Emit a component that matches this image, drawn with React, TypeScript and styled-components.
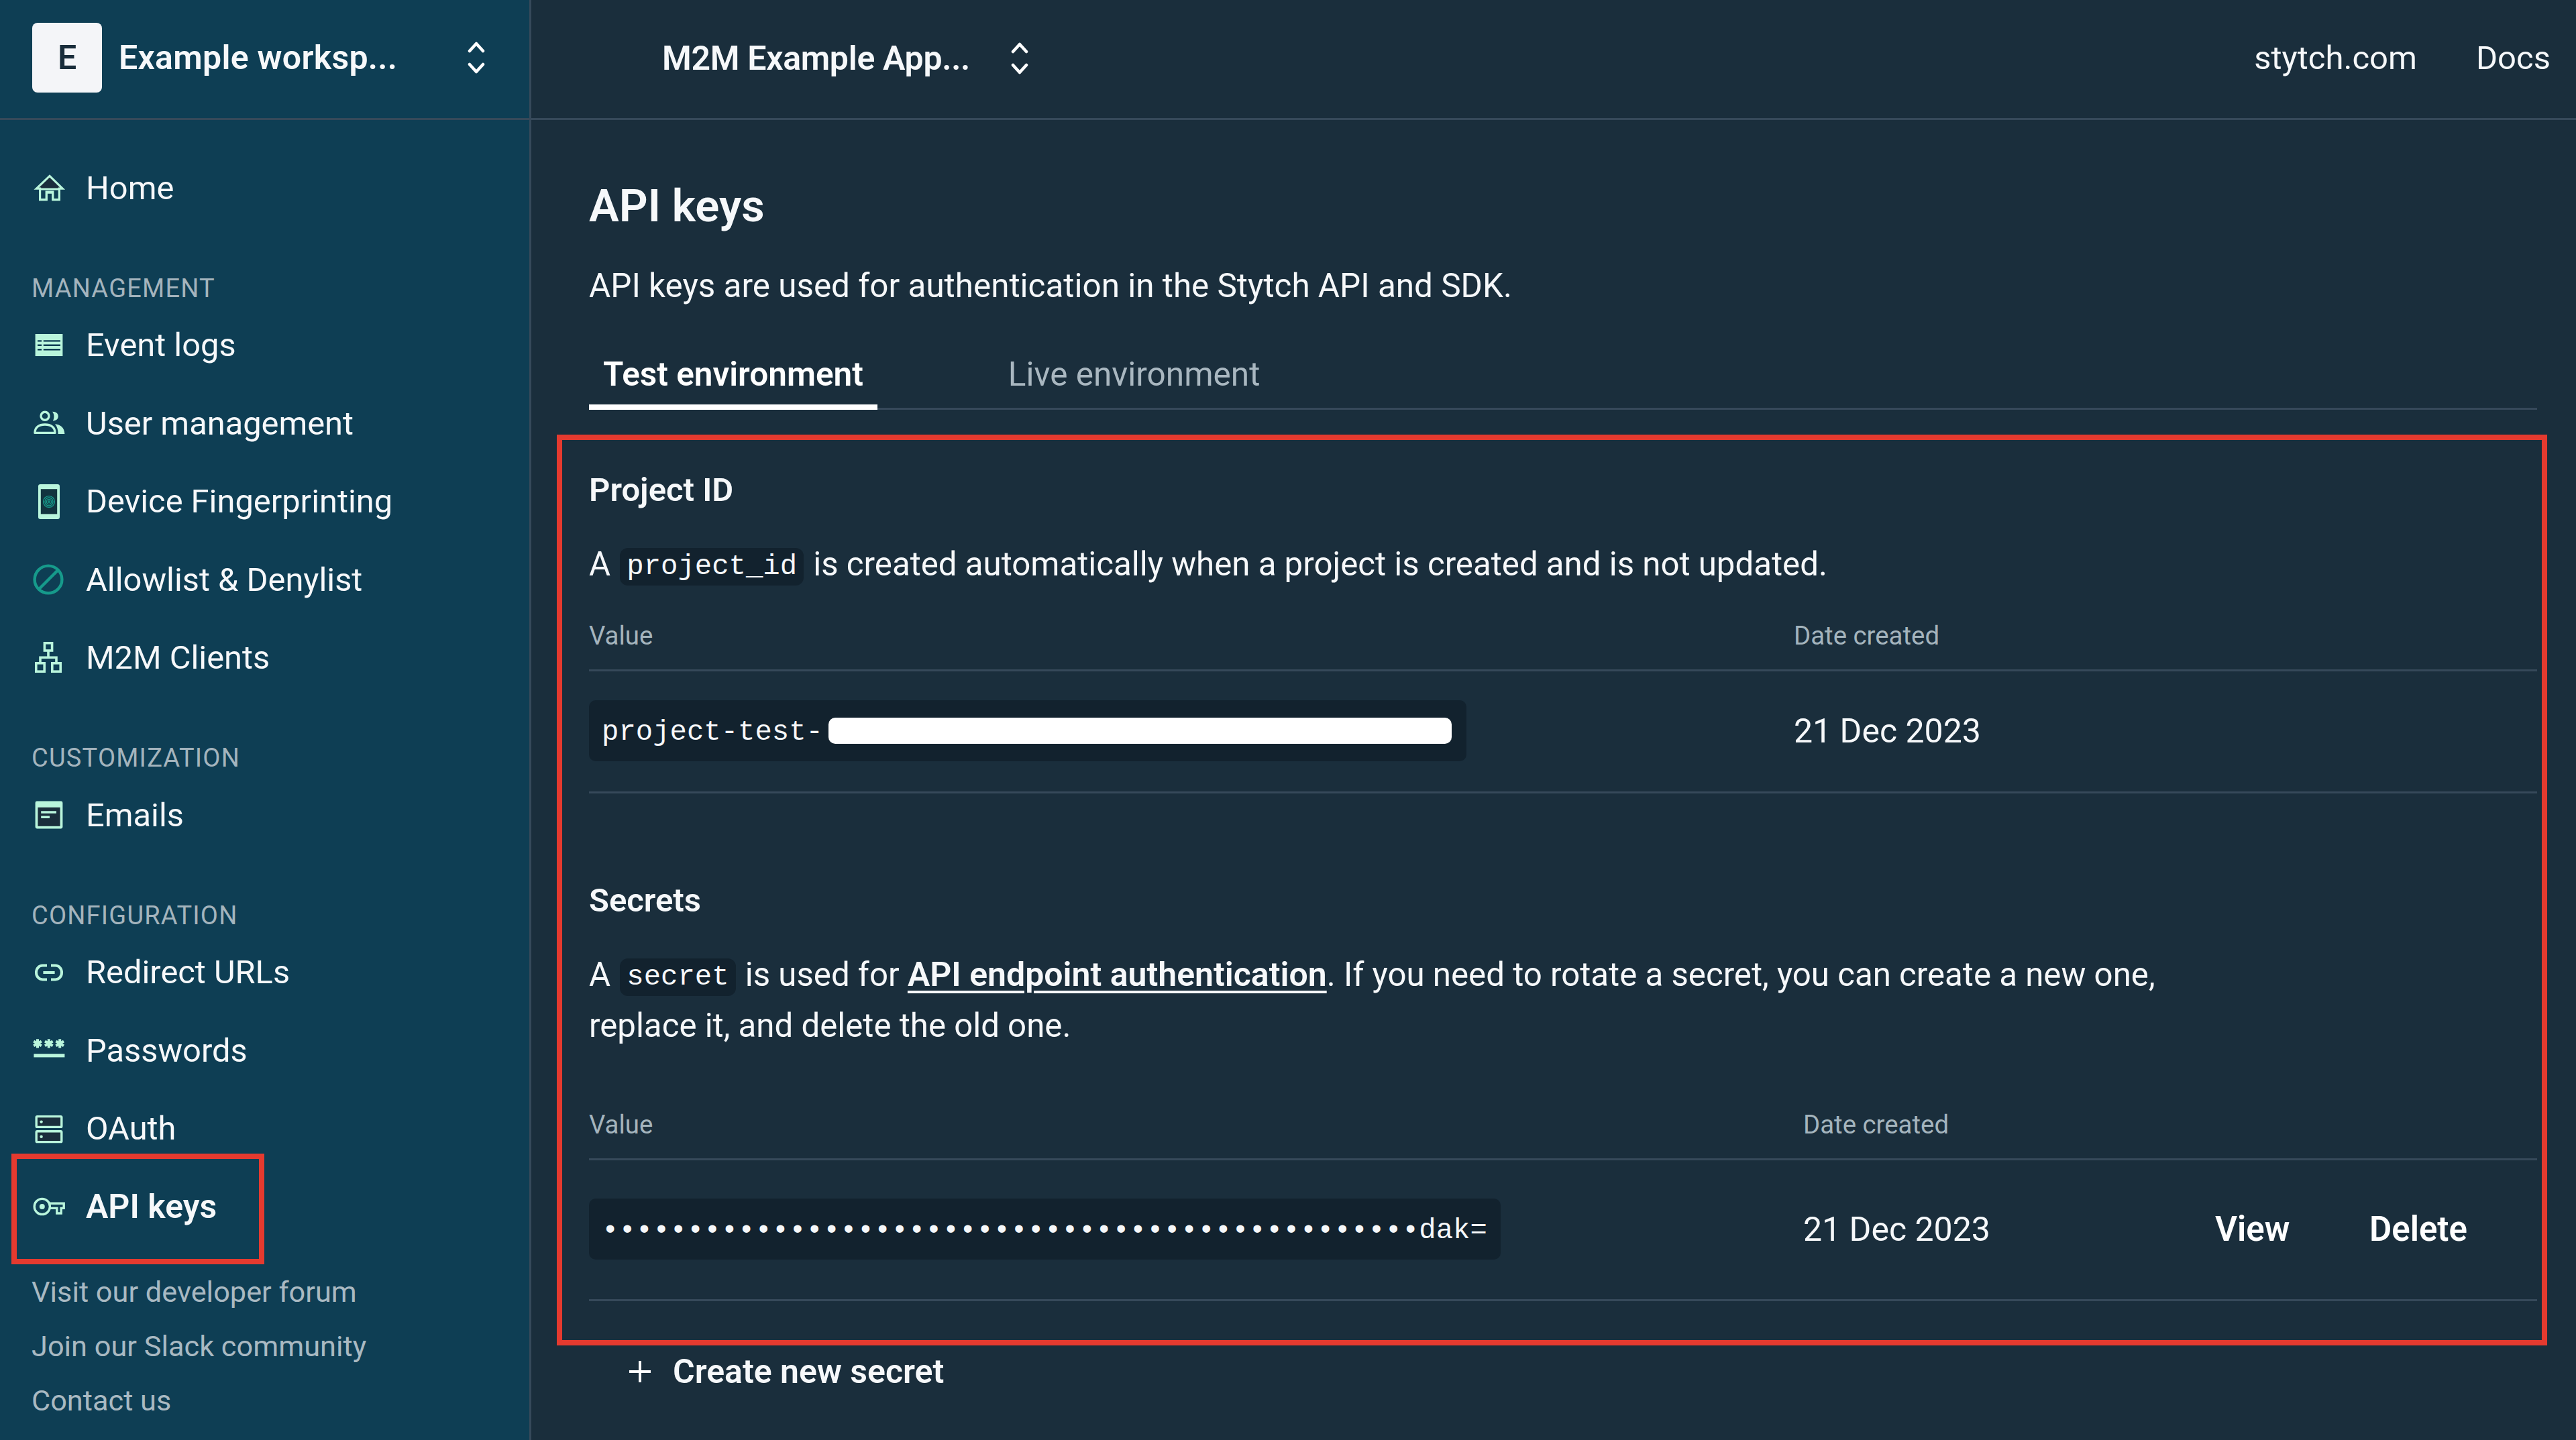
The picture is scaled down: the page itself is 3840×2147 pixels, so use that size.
import styled, { createGlobalStyle } from 'styled-components';
import type { ReactNode } from 'react';

const MINT = '#b9f5dc';
const TEAL = '#169a8b';
const NAVY = '#1a2e3c';
const SANS = '"Roboto", "Inter", "Liberation Sans", sans-serif';
const MONO = '"Liberation Mono", "DejaVu Sans Mono", monospace';

const GlobalStyle = createGlobalStyle`
  html, body {
    margin: 0;
    padding: 0;
    background: ${NAVY};
    overflow: hidden;
  }
  * {
    box-sizing: border-box;
  }
`;

const Shell = styled.div`
  position: relative;
  display: grid;
  grid-template-columns: 792px 1fr;
  width: 3840px;
  height: 2147px;
  overflow: hidden;
  font-family: ${SANS};
  color: #f6f8fa;
  background: ${NAVY};
`;

const Sidebar = styled.aside`
  display: flex;
  flex-direction: column;
  height: 100%;
  background: #0e3e54;
  border-right: 3px solid #36495a;
`;

const TopBar = styled.div`
  display: flex;
  align-items: center;
  flex: none;
  height: 179px;
  border-bottom: 3px solid #36495a;
`;

const WorkspaceBar = styled(TopBar)`
  padding: 0 0 5px 48px;
`;

const LogoTile = styled.div`
  display: flex;
  align-items: center;
  justify-content: center;
  width: 104px;
  height: 104px;
  margin-right: 25px;
  border-radius: 8px;
  background: #f4f5f8;
  color: ${NAVY};
  font-size: 50px;
  font-weight: 600;
`;

const SwitcherName = styled.span<{ $width: number; $tracking: number }>`
  width: ${(p) => p.$width}px;
  font-size: 50px;
  font-weight: 600;
  letter-spacing: ${(p) => p.$tracking}px;
  white-space: nowrap;
`;

const NavGroup = styled.nav<{ $top: number }>`
  display: flex;
  flex-direction: column;
  margin-top: ${(p) => p.$top}px;
`;

const GroupLabel = styled.div`
  height: 52px;
  padding-left: 47px;
  font-size: 38px;
  line-height: 50px;
  letter-spacing: 1.2px;
  color: #a4b4bd;
`;

const NavRow = styled.a<{ $active?: boolean }>`
  display: flex;
  align-items: center;
  gap: 32px;
  height: 116.5px;
  padding-left: 48px;
  font-size: ${(p) => (p.$active ? 50 : 48.8)}px;
  font-weight: ${(p) => (p.$active ? 600 : 400)};
  color: #f6f8fa;
`;

const FooterLinks = styled.div`
  display: flex;
  flex-direction: column;
  margin-top: 28px;
  padding-left: 47px;
`;

const FooterLink = styled.a`
  height: 81px;
  font-size: 43.3px;
  line-height: 81px;
  color: #a9b9c2;
`;

const Icon = styled.svg`
  display: block;
  flex: none;
  width: 48px;
  height: 48px;
  overflow: visible;
`;

const Chevrons = styled.svg`
  display: block;
  width: 26px;
  height: 50px;
`;

const Main = styled.main`
  display: flex;
  flex-direction: column;
  min-width: 0;
`;

const AppBar = styled(TopBar)`
  padding: 0 38px 3px 195px;
`;

const TopLinks = styled.div`
  display: flex;
  gap: 88px;
  margin-left: auto;
  font-size: 49px;
`;

const Content = styled.div`
  display: flex;
  flex-direction: column;
  padding: 0 58px 0 86px;
`;

const Title = styled.h1`
  margin: 88px 0 0;
  font-size: 67px;
  font-weight: 600;
  line-height: 80px;
`;

const Lead = styled.p`
  margin: 41px 0 0;
  font-size: 49.4px;
  line-height: 76px;
`;

const Tabs = styled.div`
  display: flex;
  gap: 174px;
  height: 100px;
  margin-top: 47px;
  border-bottom: 3px solid #36495a;
`;

const Tab = styled.div<{ $active?: boolean }>`
  height: 100px;
  padding: 0 21px;
  font-size: 49.5px;
  font-weight: ${(p) => (p.$active ? 600 : 400)};
  line-height: 94px;
  color: ${(p) => (p.$active ? '#ffffff' : '#a9b7c0')};
  border-bottom: ${(p) => (p.$active ? '8px solid #ffffff' : 'none')};
`;

const SectionTitle = styled.h2<{ $top: number }>`
  margin: ${(p) => p.$top}px 0 0;
  font-size: 49px;
  font-weight: 600;
  line-height: 60px;
`;

const Paragraph = styled.p`
  margin: 42px 0 0;
  font-size: 49.2px;
  line-height: 76px;
`;

const InlineCode = styled.code`
  display: inline-block;
  height: 56px;
  margin: 0 2px;
  padding: 0 10px;
  border-radius: 12px;
  background: #12222e;
  font-family: ${MONO};
  font-size: 42.3px;
  line-height: 56px;
  vertical-align: 2px;
`;

const DocLink = styled.a`
  font-size: 50px;
  font-weight: 600;
  text-decoration: underline;
  text-underline-offset: 7px;
  text-decoration-thickness: 4px;
`;

const HeadRow = styled.div<{ $columns: string; $top: number }>`
  display: grid;
  grid-template-columns: ${(p) => p.$columns};
  padding: ${(p) => p.$top}px 0 25px;
  font-size: 38.4px;
  line-height: 50px;
  color: #a4b4bd;
  border-bottom: 3px solid #36495a;
`;

const BodyRow = styled.div<{ $columns: string; $top: number; $bottom: number }>`
  display: grid;
  grid-template-columns: ${(p) => p.$columns};
  align-items: center;
  padding: ${(p) => p.$top}px 0 ${(p) => p.$bottom}px;
  font-size: 50px;
  border-bottom: 3px solid #36495a;
`;

const ValuePill = styled.div<{ $width: number }>`
  display: flex;
  align-items: center;
  width: ${(p) => p.$width}px;
  height: 91px;
  padding: 5px 0 0 19px;
  border-radius: 10px;
  background: #12222e;
  font-family: ${MONO};
  font-size: 42.3px;
  white-space: nowrap;
`;

const Redacted = styled.span`
  width: 929px;
  height: 39px;
  margin: -5px 0 0 8px;
  border-radius: 10px;
  background: #ffffff;
`;

const RowAction = styled.a`
  font-size: 51px;
  font-weight: 600;
  color: #ffffff;
`;

const CreateButton = styled.a`
  display: flex;
  align-items: center;
  gap: 32px;
  height: 60px;
  margin: 75px 0 0 59px;
  font-size: 50px;
  font-weight: 600;
`;

const PlusIcon = styled.svg`
  display: block;
  width: 34px;
  height: 34px;
`;

const Annotation = styled.div<{ $left: number; $top: number; $width: number; $height: number }>`
  position: absolute;
  left: ${(p) => p.$left}px;
  top: ${(p) => p.$top}px;
  width: ${(p) => p.$width}px;
  height: ${(p) => p.$height}px;
  border: 8px solid #e53a2f;
  pointer-events: none;
`;

function UpDown() {
  return (
    <Chevrons viewBox="0 0 26 50" fill="none" stroke="#ffffff" strokeWidth="4.5" strokeLinecap="round" strokeLinejoin="round">
      <path d="M3 15 L13 4 L23 15" />
      <path d="M3 35 L13 46 L23 35" />
    </Chevrons>
  );
}

const icons: Record<string, ReactNode> = {
  home: (
    <>
      <path d="M13 3.2 L22.6 12.6 H20.2 V20.8 H15.4 V15.6 H10.6 V20.8 H5.8 V12.6 H3.2 Z" fill={NAVY} stroke={MINT} strokeWidth="1.6" />
      <path d="M5.8 13 H20.2 V20.8 H15.4 V15 H10.6 V20.8 H5.8 Z" fill="#0e3e54" stroke={MINT} strokeWidth="1.6" />
    </>
  ),
  logs: (
    <>
      <rect x="2.3" y="3.5" width="20.4" height="16.5" fill={MINT} />
      <path d="M4 8.7 H7 M8.4 8.7 H21 M4 11.9 H7 M8.4 11.9 H21 M4 15.1 H7 M8.4 15.1 H21" stroke="#0e3e54" strokeWidth="1.2" />
    </>
  ),
  users: (
    <>
      <circle cx="9.5" cy="6.6" r="3" fill="none" stroke={MINT} strokeWidth="1.7" />
      <path d="M2 19.2 C2 15 5 13 9.5 13 C14 13 17 15 17 19.2 Z" fill="none" stroke={MINT} strokeWidth="1.7" strokeLinejoin="round" />
      <path d="M15 3.4 C18 3.4 19.4 5 19.4 6.8 C19.4 8.8 18 10.2 15.4 10.2 C16.6 8.4 16.6 5.2 15 3.4 Z" fill={MINT} />
      <path d="M17 12.6 C21 13 24 15.2 24.2 20 H19.3 C19.3 17 18.6 14.4 17 12.6 Z" fill={MINT} />
    </>
  ),
  device: (
    <>
      <rect x="4.5" y="-1" width="16" height="26" rx="1.6" fill={MINT} />
      <rect x="6.4" y="2.6" width="12.2" height="18.6" fill="#12343f" />
      <g fill="none" stroke={TEAL} strokeWidth="0.7">
        <circle cx="12.5" cy="12" r="4.2" />
        <circle cx="12.5" cy="12" r="3" />
        <circle cx="12.5" cy="12" r="1.8" />
        <circle cx="12.5" cy="12" r="0.6" />
      </g>
    </>
  ),
  ban: (
    <g fill="none" stroke={TEAL} strokeWidth="2.2">
      <circle cx="12" cy="12" r="10.2" />
      <path d="M5.2 19 L19 5.2" />
    </g>
  ),
  clients: (
    <g fill="none" stroke={MINT} strokeWidth="1.8">
      <rect x="9.2" y="0.9" width="5.6" height="5.6" />
      <rect x="2.9" y="15.9" width="6.2" height="6.2" />
      <rect x="14.9" y="15.9" width="6.2" height="6.2" />
      <path d="M12 6.5 V11.6 M6 15.9 V11.6 H18 V15.9" />
    </g>
  ),
  emails: (
    <>
      <rect x="2.3" y="1.8" width="20.4" height="20.4" rx="1.2" fill={MINT} />
      <rect x="4.2" y="6.4" width="16.6" height="14" fill={NAVY} />
      <path d="M6.6 10 H18 M6.6 13.6 H13" stroke={MINT} strokeWidth="1.8" />
    </>
  ),
  link: (
    <g fill="none" stroke={MINT} strokeWidth="2">
      <path d="M11 6.8 H7.8 C5 6.8 3 9 3 12 C3 15 5 17.2 7.8 17.2 H11" />
      <path d="M14 6.8 H17.2 C20 6.8 22 9 22 12 C22 15 20 17.2 17.2 17.2 H14" />
      <path d="M8.2 12 H16.8" />
    </g>
  ),
  passwords: (
    <>
      <g stroke={MINT} strokeWidth="2">
        <path d="M4 3.6 V10.2 M1.1 5.2 L6.9 8.6 M6.9 5.2 L1.1 8.6" />
        <path d="M12.4 3.6 V10.2 M9.5 5.2 L15.3 8.6 M15.3 5.2 L9.5 8.6" />
        <path d="M20.6 3.6 V10.2 M17.7 5.2 L23.5 8.6 M23.5 5.2 L17.7 8.6" />
      </g>
      <rect x="1.2" y="14.6" width="23" height="2.6" fill={MINT} />
    </>
  ),
  oauth: (
    <>
      <rect x="3.1" y="2.8" width="18.8" height="7.9" rx="0.6" fill={NAVY} stroke={MINT} strokeWidth="1.7" />
      <rect x="3.1" y="13.9" width="18.8" height="7.9" rx="0.6" fill={NAVY} stroke={MINT} strokeWidth="1.7" />
      <circle cx="6.8" cy="6.8" r="1.1" fill={MINT} />
      <circle cx="6.8" cy="17.9" r="1.1" fill={MINT} />
    </>
  ),
  key: (
    <g fill="none" stroke={MINT} strokeWidth="1.7">
      <circle cx="7.4" cy="12" r="5.8" />
      <circle cx="7.4" cy="12" r="2" fill={MINT} stroke="none" />
      <path d="M13 9.6 H23.6 V13.2 H21.6 V17 H18.4 V13.2 H13" />
    </g>
  ),
};

function NavItem({ icon, label, active }: { icon: string; label: string; active?: boolean }) {
  return (
    <NavRow $active={active}>
      <Icon viewBox="0 0 24 24">{icons[icon]}</Icon>
      {label}
    </NavRow>
  );
}

const projectColumns = '1796px 1fr';
const secretColumns = '1810px 614px 230px 1fr';

export default function App() {
  return (
    <Shell>
      <GlobalStyle />
      <Sidebar>
        <WorkspaceBar>
          <LogoTile>E</LogoTile>
          <SwitcherName $width={520} $tracking={0.3}>
            Example worksp...
          </SwitcherName>
          <UpDown />
        </WorkspaceBar>
        <NavGroup $top={43}>
          <NavItem icon="home" label="Home" />
        </NavGroup>
        <NavGroup $top={66}>
          <GroupLabel>MANAGEMENT</GroupLabel>
          <NavItem icon="logs" label="Event logs" />
          <NavItem icon="users" label="User management" />
          <NavItem icon="device" label="Device Fingerprinting" />
          <NavItem icon="ban" label="Allowlist & Denylist" />
          <NavItem icon="clients" label="M2M Clients" />
        </NavGroup>
        <NavGroup $top={66}>
          <GroupLabel>CUSTOMIZATION</GroupLabel>
          <NavItem icon="emails" label="Emails" />
        </NavGroup>
        <NavGroup $top={66}>
          <GroupLabel>CONFIGURATION</GroupLabel>
          <NavItem icon="link" label="Redirect URLs" />
          <NavItem icon="passwords" label="Passwords" />
          <NavItem icon="oauth" label="OAuth" />
          <NavItem icon="key" label="API keys" active />
        </NavGroup>
        <FooterLinks>
          <FooterLink>Visit our developer forum</FooterLink>
          <FooterLink>Join our Slack community</FooterLink>
          <FooterLink>Contact us</FooterLink>
        </FooterLinks>
      </Sidebar>
      <Main>
        <AppBar>
          <SwitcherName $width={520} $tracking={-0.3}>
            M2M Example App...
          </SwitcherName>
          <UpDown />
          <TopLinks>
            <span>stytch.com</span>
            <span>Docs</span>
          </TopLinks>
        </AppBar>
        <Content>
          <Title>API keys</Title>
          <Lead>API keys are used for authentication in the Stytch API and SDK.</Lead>
          <Tabs>
            <Tab $active>Test environment</Tab>
            <Tab>Live environment</Tab>
          </Tabs>
          <SectionTitle $top={90}>Project ID</SectionTitle>
          <Paragraph>
            A <InlineCode>project_id</InlineCode> is created automatically when a project is created and is not updated.
          </Paragraph>
          <HeadRow $columns={projectColumns} $top={44}>
            <span>Value</span>
            <span>Date created</span>
          </HeadRow>
          <BodyRow $columns={projectColumns} $top={43} $bottom={45}>
            <ValuePill $width={1308}>
              project-test-
              <Redacted />
            </ValuePill>
            <span>21 Dec 2023</span>
          </BodyRow>
          <SectionTitle $top={130}>Secrets</SectionTitle>
          <Paragraph>
            A <InlineCode>secret</InlineCode> is used for <DocLink>API endpoint authentication</DocLink>. If you need to rotate a secret, you can create a new one,
            <br />
            replace it, and delete the old one.
          </Paragraph>
          <HeadRow $columns={secretColumns} $top={85}>
            <span>Value</span>
            <span>Date created</span>
          </HeadRow>
          <BodyRow $columns={secretColumns} $top={57} $bottom={59}>
            <ValuePill $width={1359}>{'•'.repeat(48)}dak=</ValuePill>
            <span>21 Dec 2023</span>
            <RowAction>View</RowAction>
            <RowAction>Delete</RowAction>
          </BodyRow>
          <CreateButton>
            <PlusIcon viewBox="0 0 34 34" stroke="#ffffff" strokeWidth="4">
              <path d="M17 1 V33 M1 17 H33" />
            </PlusIcon>
            Create new secret
          </CreateButton>
        </Content>
      </Main>
      <Annotation $left={17} $top={1720} $width={377} $height={165} />
      <Annotation $left={830} $top={648} $width={2967} $height={1358} />
    </Shell>
  );
}
